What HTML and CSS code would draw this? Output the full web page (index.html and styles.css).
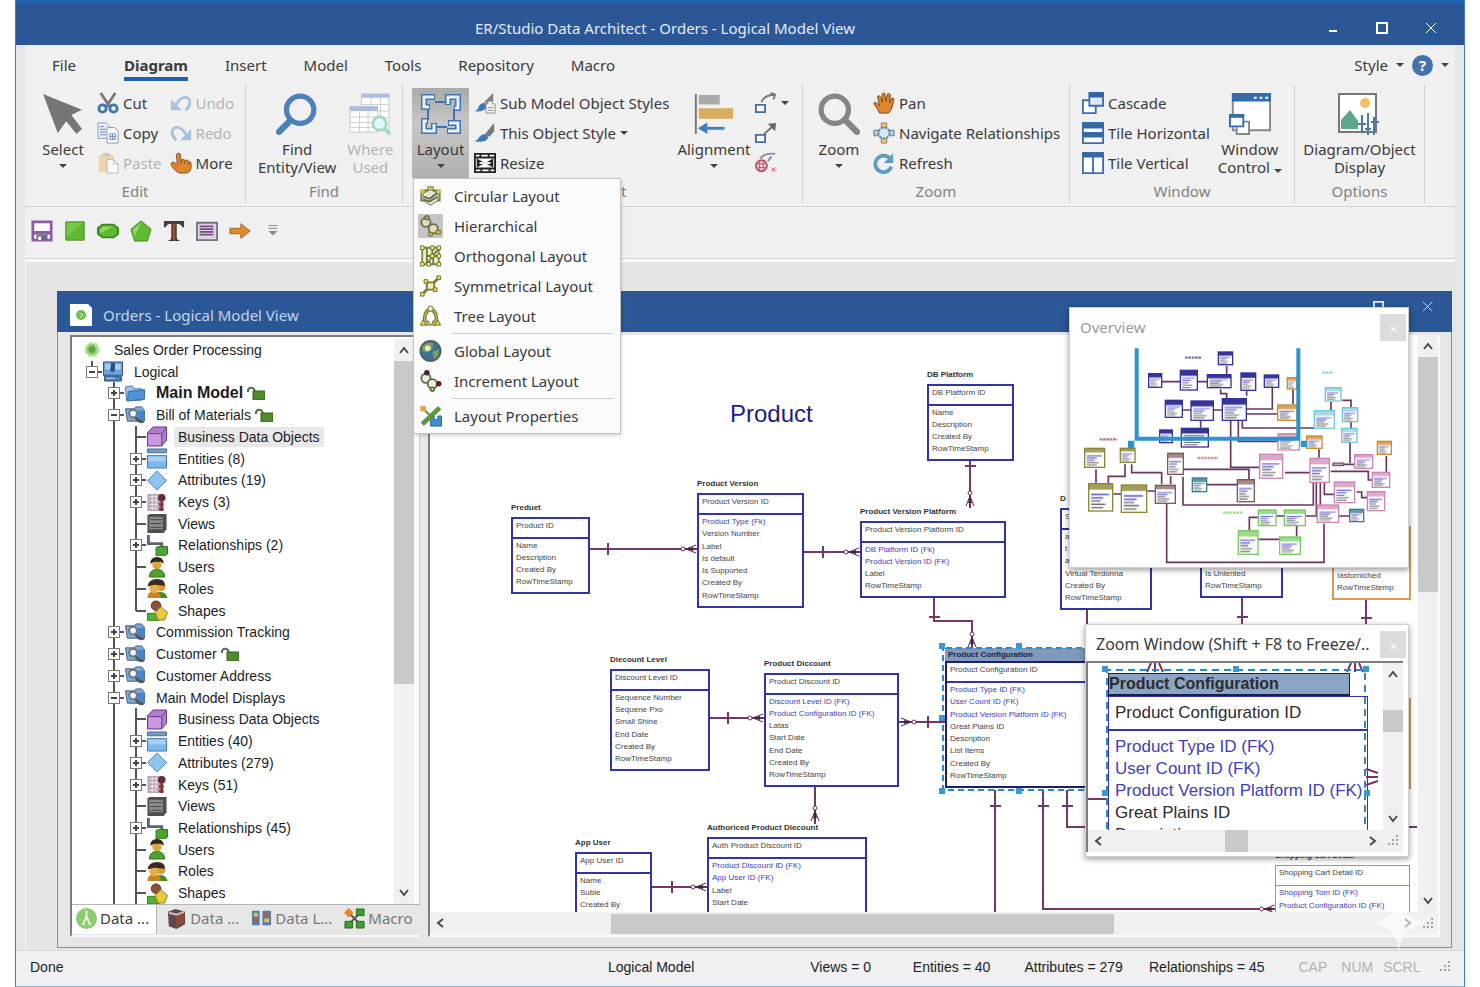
FILE: index.html
```html
<!DOCTYPE html>
<html lang="en">
<head>
    <meta charset="UTF-8">
    <meta name="viewport" content="width=device-width, initial-scale=1.0">
    <title>ER/Studio Data Architect</title>
    <link rel="stylesheet" href="styles.css">
</head>
<body>

<!-- Icon sprite -->
<svg class="sprite" aria-hidden="true">
    <symbol id="i-cursor" viewBox="0 0 40 40"><path d="M1 1L38 16L28 21L38 34L33 39L23 27L15 38Z" fill="#757575"/></symbol>
    <symbol id="i-cut" viewBox="0 0 24 24"><path d="M4 1L14 16M20 1L10 16" stroke="#777" stroke-width="3" fill="none"/><circle cx="6" cy="18" r="4" fill="none" stroke="#3c74b0" stroke-width="3"/><circle cx="18" cy="18" r="4" fill="none" stroke="#3c74b0" stroke-width="3"/></symbol>
    <symbol id="i-copy" viewBox="0 0 24 24"><path d="M1 1h9l4 4v13H1z" fill="#e8eef6" stroke="#7f9cc4"/><path d="M3 5h5M3 8h7M3 11h7M3 14h7" stroke="#5f86b8"/><path d="M11 6h8l4 4v13H11z" fill="#f8fafd" stroke="#8b98aa"/><path d="M14 13h6v6h-6zM14 16h6M17 13v6" stroke="#5f86b8" fill="none"/></symbol>
    <symbol id="i-paste" viewBox="0 0 24 24"><path d="M2 3h16v19H2z" fill="#f2d3b0"/><path d="M6 1h8v4H6z" fill="#c9c9c9"/><path d="M11 8h7l5 5v10H11z" fill="#fafafa" stroke="#b5b5b5"/><path d="M18 8v5h5" fill="none" stroke="#b5b5b5"/></symbol>
    <symbol id="i-undo" viewBox="0 0 24 24"><path d="M5 17C9 8 13 5 18 6C24 8 22 16 17 20" fill="none" stroke="#a9c0de" stroke-width="3"/><path d="M1 8v12h12z" fill="#a9c0de"/></symbol>
    <symbol id="i-redo" viewBox="0 0 24 24"><path d="M19 17C15 8 11 5 6 6C0 8 2 16 7 20" fill="none" stroke="#a9c0de" stroke-width="3"/><path d="M23 8v12H11z" fill="#a9c0de"/></symbol>
    <symbol id="i-point" viewBox="0 0 24 24"><path d="M7 3q1-3 4-1l1 7q2-2 4 0q3-1 4 1q3 0 3 3v4q-1 6-6 6h-7Q6 21 3 17Q-1 11 4 11l4 3z" fill="#dd8530" stroke="#8a4a14"/><path d="M12 9v4M16 10v3M20 11v3" stroke="#8a4a14"/></symbol>
    <symbol id="i-find" viewBox="0 0 40 40"><circle cx="23" cy="16" r="13" fill="none" stroke="#4d80ba" stroke-width="5"/><path d="M13 27L3 37" stroke="#4d80ba" stroke-width="6" stroke-linecap="round"/></symbol>
    <symbol id="i-where" viewBox="0 0 44 44"><path d="M13 1h29v38H13z" fill="#fff" stroke="#c4c4c4"/><path d="M13 1h29v4H13z" fill="#a9bede"/><path d="M13 12h29M13 19h29M13 26h29M23 5v34M33 5v34" stroke="#ccc"/><path d="M1 14h29v27H1z" fill="#fff" stroke="#c4c4c4"/><path d="M1 14h29v5H1z" fill="#a9bede"/><path d="M1 25h29M1 31h29M1 36h29M11 19v22M20 19v22" stroke="#ccc"/><circle cx="32" cy="32" r="7" fill="#e6f4fb" stroke="#a6d9c2" stroke-width="3"/><path d="M37 37l6 6" stroke="#a6d9c2" stroke-width="4"/></symbol>
    <symbol id="i-layout" viewBox="0 0 42 42"><path d="M15 9h12M8 16v11M34 16v11M15 34h12" stroke="#3f73b0" stroke-width="2"/><g fill="none" stroke="#3f73b0" stroke-width="6"><path d="M15 4H4v10h6M27 14h0M28 12V4h10v11h-4M8 28H4v10h10v-8M28 30h10v8H27"/></g><g fill="none" stroke="#e8f2fc" stroke-width="3"><path d="M14 4H4v10h5M28 11V4h10v11h-3M7 28H4v10h10v-7M29 30h9v8H28"/></g></symbol>
    <symbol id="i-brush" viewBox="0 0 24 24"><path d="M22 1L12 13l4 3z" fill="#8b8b8b"/><path d="M22 1v9l-5 6-4-3z" fill="#777"/><path d="M12 13q4 1 3 5q-3 5-14 3q4-2 5-5q2-3 6-3z" fill="#3f78b8"/></symbol>
    <symbol id="i-brushdoc" viewBox="0 0 24 24"><path d="M21 1L11 11l4 3z" fill="#9b9b9b"/><path d="M21 1v9h-5l-5 2z" fill="#808080"/><path d="M11 12q4 1 3 4q-3 6-13 5q4-2 4-5q2-4 6-4z" fill="#3f78b8"/><path d="M13 13h2v-3h5v3h3v10H13z" fill="#f4f4f4" stroke="#888"/><path d="M15 17h6M15 20h6" stroke="#888"/></symbol>
    <symbol id="i-resize" viewBox="0 0 24 24"><path d="M1 2h22v20H1z" fill="#fff" stroke="#222" stroke-width="2"/><path d="M1 6h22M1 18h22M7 2v4M17 18v4M16 2v4M8 18v4" stroke="#222" stroke-width="2"/><path d="M3 7l7 4h4l7-4v10l-7-4h-4l-7 4z" fill="#222"/><path d="M6 12h12" stroke="#fff" stroke-width="2"/></symbol>
    <symbol id="i-align" viewBox="0 0 40 44"><path d="M1 1v42" stroke="#777" stroke-width="2"/><path d="M4 2h22v10H4z" fill="#a9a9a9"/><path d="M4 16h36v11H4z" fill="#d9ac5e"/><path d="M31 37H6" stroke="#3f82bf" stroke-width="3"/><path d="M13 31v12L3 37z" fill="#3f82bf"/></symbol>
    <symbol id="i-curve" viewBox="0 0 24 24"><path d="M1 14h10v8H1z" fill="#fff" stroke="#3f6fa8" stroke-width="2"/><path d="M7 11Q10 3 22 3M17 1l5 2-2 5" fill="none" stroke="#777" stroke-width="2"/></symbol>
    <symbol id="i-straight" viewBox="0 0 24 24"><path d="M1 14h10v8H1z" fill="#fff" stroke="#3f6fa8" stroke-width="2"/><path d="M10 13L19 5" stroke="#666" stroke-width="2"/><path d="M14 2l9-1-1 9z" fill="#666"/></symbol>
    <symbol id="i-nolink" viewBox="0 0 24 24"><circle cx="7" cy="15" r="6" fill="#f0d8dc" stroke="#b5556a" stroke-width="2"/><path d="M2 13h10M3 17h9M5 10v10M9 10v10" stroke="#b5556a"/><path d="M6 7Q10 1 22 2M14 10l4-5" fill="none" stroke="#7e8c99" stroke-width="2"/><path d="M18 17l4 4M22 17l-4 4" stroke="#c03a3a" stroke-width="1"/></symbol>
    <symbol id="i-zoom" viewBox="0 0 40 40"><circle cx="16" cy="16" r="13" fill="none" stroke="#858585" stroke-width="5"/><path d="M27 27L37 37" stroke="#858585" stroke-width="6" stroke-linecap="round"/></symbol>
    <symbol id="i-pan" viewBox="0 0 24 24"><path d="M7 23Q5 18 1 13q0-3 3-1l3 3L5 5q1-2 3 0l2 6V2q2-2 3 0l1 8 2-8q2-1 3 1l-1 9 2-5q3-1 3 1l-3 11q-2 3-3 4z" fill="#dd8530" stroke="#7a4010"/></symbol>
    <symbol id="i-navigate" viewBox="0 0 24 24"><path d="M12 3v18M3 12h18" stroke="#777" stroke-width="2"/><g fill="#efc27c" stroke="#8c7a5a"><path d="M9 1h6v5H9zM9 18h6v5H9z"/></g><g fill="#b9cbe0" stroke="#55708f"><path d="M1 9h5v6H1zM18 9h5v6h-5z"/></g><circle cx="12" cy="12" r="6" fill="#d7e9f7" stroke="#6f8296" stroke-width="2" stroke-dasharray="3 1"/></symbol>
    <symbol id="i-refresh" viewBox="0 0 24 24"><path d="M19 8A9 9 0 1 0 20 16" fill="none" stroke="#5c9cc6" stroke-width="4"/><path d="M22 1v11H12z" fill="#5c9cc6"/></symbol>
    <symbol id="i-cascade" viewBox="0 0 24 24"><path d="M1 9h14v14H1z" fill="#fff" stroke="#3f6fa8" stroke-width="2"/><path d="M8 1h15v14H8z" fill="#dfe9f5" stroke="#3f6fa8" stroke-width="2"/><path d="M8 1h15v5H8z" fill="#2f62a4"/></symbol>
    <symbol id="i-tileh" viewBox="0 0 24 24"><path d="M1 1h22v22H1z" fill="#fff" stroke="#3f6fa8" stroke-width="2"/><path d="M1 1h22v6H1zM1 11h22v6H1z" fill="#3568a8"/></symbol>
    <symbol id="i-tilev" viewBox="0 0 24 24"><path d="M1 1h22v22H1z" fill="#fff" stroke="#3f6fa8" stroke-width="2"/><path d="M1 1h22v5H1z" fill="#3568a8"/><path d="M12 5v18" stroke="#3f6fa8" stroke-width="2"/></symbol>
    <symbol id="i-windows" viewBox="0 0 44 44"><path d="M4 1h39v38H4z" fill="#fff" stroke="#888" stroke-width="2"/><path d="M3 0h41v9H3z" fill="#336cab"/><path d="M26 5h3M32 5h3M38 5h3" stroke="#fff" stroke-width="2"/><path d="M8 30h13v13H8z" fill="#fff" stroke="#888" stroke-width="2"/><path d="M1 23h14v12H1z" fill="#fff" stroke="#336cab" stroke-width="2"/><path d="M1 23h14v3H1z" fill="#336cab"/></symbol>
    <symbol id="i-display" viewBox="0 0 42 42"><path d="M1 1h37v38H1z" fill="#fff" stroke="#777" stroke-width="2"/><circle cx="27" cy="10" r="5" fill="#efbf63"/><path d="M3 36V27l9-10 8 11v8z" fill="#5ea58e"/><path d="M24 22v18M30 20v22M36 24v18M20 31h8M33 29h8M27 36h6" stroke="#4d78ac" stroke-width="2"/></symbol>
    <symbol id="i-save" viewBox="0 0 24 24"><path d="M2 2h20v20H2z" fill="#fff" stroke="#8a5ca6" stroke-width="3"/><path d="M2 12h20v4H2z" fill="#8a5ca6"/><path d="M6 16h12v6H6z" fill="#6d6d7c"/><path d="M8 18h3v4H8z" fill="#fff"/></symbol>
    <symbol id="i-rect" viewBox="0 0 24 24"><path d="M2 2h20v20H2z" fill="#5fba2f" stroke="#3f8420"/><path d="M3 3h18L3 18z" fill="#75c84c"/></symbol>
    <symbol id="i-pill" viewBox="0 0 24 24"><path d="M6 5h12l5 4v6l-5 4H6l-5-4V9z" fill="#5fba2f" stroke="#3f8420" stroke-width="2"/><path d="M6 7h11L5 14l-2-2z" fill="#8ed669"/></symbol>
    <symbol id="i-penta" viewBox="0 0 24 24"><path d="M12 1l11 9-4 13H5L1 10z" fill="#5fba2f" stroke="#3f8420"/><path d="M12 3L3 11l2 7z" fill="#8ed669"/></symbol>
    <symbol id="i-text" viewBox="0 0 24 24"><path d="M1 1h22v7h-2q-1-4-6-4v15q0 3 3 3v1H6v-1q3 0 3-3V4Q4 4 3 8H1z" fill="#4a3a3e"/><path d="M12 4v18" stroke="#a34d2c" stroke-width="3"/></symbol>
    <symbol id="i-image" viewBox="0 0 24 24"><path d="M1 3h22v19H1z" fill="#dcd6e2" stroke="#6f7486" stroke-width="2"/><path d="M4 7h15M4 10h15M4 13h15M4 16h15" stroke="#7c4a86" stroke-width="2"/></symbol>
    <symbol id="i-arrow" viewBox="0 0 24 24"><path d="M1 9h12V4l10 8-10 8v-5H1z" fill="#e08a2e" stroke="#a35c18"/></symbol>

    <symbol id="m-circular" viewBox="0 0 24 24"><path d="M2 6h20v11H2z" fill="none" stroke="#827b34" stroke-width="2"/><path d="M9 2h6v4H9z" fill="#e8d558" stroke="#6d6a34"/><path d="M4 9l8-4 8 4v8l-8 5-8-5z" fill="#e3e6d8" stroke="#5b6b40"/><path d="M5 13l6 2 8-6M5 16l6 2 8-5" fill="none" stroke="#5b6b40" stroke-width="2"/><path d="M1 5h4v4H1zM19 5h4v4h-4z" fill="#d6c542"/></symbol>
    <symbol id="m-hier" viewBox="0 0 24 24"><g fill="#dcdcc8" stroke="#6f6f3c" stroke-width="2"><circle cx="7" cy="8" r="5"/><circle cx="15" cy="15" r="5"/><circle cx="8" cy="3" r="2"/></g><path d="M18 17h5v4h-5zM10 19h4v4h-4z" fill="#c9b54a" stroke="#6f6f3c"/></symbol>
    <symbol id="m-ortho" viewBox="0 0 24 24"><path d="M3 3h18v18H3z" fill="#eef0d6" stroke="#7f8a3c" stroke-width="2"/><path d="M8 3v18M8 12h13M14 3v9l-5 8M14 12l7-8M15 12v9" fill="none" stroke="#6f7a34" stroke-width="2"/><g fill="#f3ee7a" stroke="#6a6a30"><path d="M1 1h4v4H1zM12 1h4v4h-4zM19 1h4v4h-4zM1 19h4v4H1zM12 10h4v4h-4zM19 10h4v4h-4zM19 19h4v4h-4zM8 19h4v4H8z"/></g></symbol>
    <symbol id="m-symm" viewBox="0 0 24 24"><path d="M3 21L21 3M6 6l12 11" stroke="#7d7a34" stroke-width="3"/><path d="M8 8h8v8H8z" fill="#f1efc6" stroke="#7d7a34" stroke-width="2"/><g fill="#eadf52" stroke="#6a6a30"><path d="M19 1h4v4h-4zM1 19h4v4H1zM5 5h4v4H5zM15 14h4v4h-4z"/></g></symbol>
    <symbol id="m-tree" viewBox="0 0 24 24"><path d="M12 4Q4 8 6 19M12 4Q20 8 18 19" fill="none" stroke="#7d7a34" stroke-width="4"/><path d="M12 4Q4 8 6 19M12 4Q20 8 18 19" fill="none" stroke="#e4dc7c" stroke-width="1"/><circle cx="12" cy="4" r="3" fill="#eee9a0" stroke="#6a6a30"/><path d="M1 22l3-6 3 6zM7 22l2-5 3 5zM13 22l2-5 2 5zM17 22l3-6 3 6z" fill="#ecd63c" stroke="#6a6a30"/></symbol>
    <symbol id="m-globe" viewBox="0 0 24 24"><circle cx="12" cy="12" r="11" fill="#3c7199" stroke="#56605c" stroke-width="2"/><path d="M3 7q6-6 12-3l-1 6-6 4-5-2zM14 13l7-3q1 7-5 11z" fill="#7fa35e"/><circle cx="9" cy="9" r="3" fill="#f1f0c0"/></symbol>
    <symbol id="m-incr" viewBox="0 0 24 24"><g fill="#eef0e2" stroke="#5f6c3e" stroke-width="2"><circle cx="7" cy="9" r="5"/><circle cx="14" cy="15" r="5"/><circle cx="14" cy="21" r="2"/></g><circle cx="8" cy="3" r="3" fill="#40252a"/><circle cx="21" cy="15" r="3" fill="#5c1c20"/></symbol>
    <symbol id="m-props" viewBox="0 0 24 24"><path d="M3 3l9 9" stroke="#6f7a3c" stroke-width="2"/><path d="M1 1h6v6H1z" fill="#e2a43c"/><path d="M12 12h4v4h4v-4h4v11H12z" fill="#3f8fcf" stroke="#2d5f8c"/><path d="M3 21L22 3" stroke="#5b9a3c" stroke-width="5"/></symbol>

    <symbol id="t-root" viewBox="0 0 20 20"><circle cx="9" cy="10" r="6" fill="#86c766" stroke="#b8e0a2" stroke-width="3" stroke-dasharray="3 2"/><circle cx="9" cy="10" r="3" fill="#5da342"/></symbol>
    <symbol id="t-logical" viewBox="0 0 22 22"><path d="M1 1h20v14H1z" fill="#6ba3da" stroke="#2b4c77"/><path d="M3 3h16v6H3z" fill="#a9cdf0"/><path d="M9 2h4v8l-2 2-3-2z" fill="#234f8c"/><path d="M2 16h18v5H2z" fill="#4d7fb8" stroke="#2b4c77"/><path d="M4 18h9" stroke="#cfdff0"/></symbol>
    <symbol id="t-folder" viewBox="0 0 22 22"><path d="M1 4l7-1 2 3h8v12H2z" fill="#9cc4e8" stroke="#4f7fb0"/><path d="M4 9l17-2v10L3 19z" fill="#4c93d6" stroke="#3668a0"/></symbol>
    <symbol id="t-sub" viewBox="0 0 22 22"><path d="M1 4h9l2-2h6l3 4v11H3z" fill="#7fa9d2" stroke="#41607f"/><path d="M14 6h7v10h-7z" fill="#4486cc"/><circle cx="9" cy="9" r="4" fill="#f4f8fc" stroke="#6d747c" stroke-width="2"/><path d="M12 13q3 6 8 4" fill="none" stroke="#555" stroke-width="3"/></symbol>
    <symbol id="t-cube" viewBox="0 0 22 22"><path d="M1 7l6-6h14v14l-5 6H1z" fill="#b07bd0" stroke="#5f3a7c"/><path d="M2 8h14v12H2z" fill="#c99ae0"/><path d="M2 8h14l5-6M16 8v12" fill="none" stroke="#5f3a7c"/></symbol>
    <symbol id="t-entity" viewBox="0 0 22 22"><path d="M1 1h20v4H1z" fill="#6f9fc8" stroke="#47698a"/><path d="M1 8h20v13H1z" fill="#7db8ec" stroke="#3d75ab"/><path d="M2 9h18v5H2z" fill="#a7d0f5"/></symbol>
    <symbol id="t-attr" viewBox="0 0 22 22"><path d="M11 1l10 10-10 10L1 11z" fill="#8fc3f0" stroke="#4f86ba"/></symbol>
    <symbol id="t-keys" viewBox="0 0 22 22"><path d="M1 2h14v18H1z" fill="#b7a7b6"/><path d="M3 5h9M3 9h9M3 13h9M3 17h7M6 3v16M10 3v16" stroke="#efe6ee"/><circle cx="16" cy="6" r="4" fill="#5c2d3a"/><path d="M16 8v12M13 13h5M13 18h5" stroke="#8a3340" stroke-width="3"/></symbol>
    <symbol id="t-view" viewBox="0 0 22 22"><path d="M1 2l3-1h17v16l-3 4H1z" fill="#4f4f4f"/><path d="M3 4h14v13H3z" fill="#8c8c8c"/><path d="M4 7h12M4 11h12M4 15h12" stroke="#444"/></symbol>
    <symbol id="t-rel" viewBox="0 0 22 22"><path d="M2 0v9h14v4" fill="none" stroke="#5c6470" stroke-width="3"/><path d="M10 13l3-1h9v8l-3 2h-9z" fill="#46a82c" stroke="#2d701a"/></symbol>
    <symbol id="t-user" viewBox="0 0 22 22"><path d="M3 21q0-8 8-8t8 8z" fill="#4da32f" stroke="#2f6e1c"/><circle cx="11" cy="8" r="5" fill="#dba63c"/><path d="M4 7q0-7 7-7t7 7l-3-2H8z" fill="#33261a"/></symbol>
    <symbol id="t-role" viewBox="0 0 22 22"><path d="M12 21v-6q8-2 10 6z" fill="#3f8c28"/><circle cx="15" cy="9" r="5" fill="#d99a38"/><path d="M1 21q0-7 7-7t7 7z" fill="#c98424"/><circle cx="8" cy="11" r="5" fill="#e6b048"/><path d="M1 9q1-8 10-8t8 7L8 7z" fill="#3d2a1e"/></symbol>
    <symbol id="t-shape" viewBox="0 0 22 22"><circle cx="10" cy="6" r="5" fill="#8c5138" stroke="#5c3020"/><path d="M1 14h12v8H1z" fill="#56b036" stroke="#35781f"/><path d="M15 7l7 6-3 8h-7l-3-8z" fill="#e8c83c" stroke="#9a7c1c"/></symbol>
    <symbol id="t-lock" viewBox="0 0 18 14"><path d="M1 6V4q2-4 6-1l1 3" fill="none" stroke="#556b4c" stroke-width="2"/><path d="M6 5h12v9H6z" fill="#4f8a2c" stroke="#34601a"/></symbol>
    <symbol id="b-data" viewBox="0 0 22 22"><circle cx="11" cy="11" r="11" fill="#8ccb72"/><path d="M11 3v6l-4 9M11 9l4 9" stroke="#eef8e8" stroke-width="2" fill="none"/></symbol>
    <symbol id="b-dict" viewBox="0 0 22 22"><path d="M2 4l8-3 10 3v13l-9 5-8-3z" fill="#5b4a48"/><path d="M10 7l9-2v11l-8 4z" fill="#8a4a36"/><path d="M3 5l8 2 8-3" stroke="#c9c0bc" stroke-width="2" fill="none"/></symbol>
    <symbol id="b-lineage" viewBox="0 0 22 22"><path d="M1 3h8v15H1zM12 3h9v15h-9z" fill="#4f7fae"/><path d="M3 5h4v4H3zM14 11h5v4h-5z" fill="#e9c24b"/><path d="M3 11h4v4H3zM14 5h5v4h-5z" fill="#c2583a"/></symbol>
    <symbol id="b-macro" viewBox="0 0 22 22"><path d="M5 5l12 12M17 5L5 17" stroke="#555" stroke-width="2"/><path d="M5 0l5 5-5 5-5-5z" fill="#e5862d"/><path d="M13 1h8v7h-8zM1 14h8v7H1zM13 14h8v7h-8z" fill="#3f9c2c" stroke="#256a18"/></symbol>

    <symbol id="c-up" viewBox="0 0 12 12"><path d="M2 9l4-5 4 5" fill="none" stroke="#4a4a4a" stroke-width="2"/></symbol>
    <symbol id="c-down" viewBox="0 0 12 12"><path d="M2 3l4 5 4-5" fill="none" stroke="#4a4a4a" stroke-width="2"/></symbol>
    <symbol id="c-left" viewBox="0 0 12 12"><path d="M9 2L4 6l5 4" fill="none" stroke="#4a4a4a" stroke-width="2"/></symbol>
    <symbol id="c-right" viewBox="0 0 12 12"><path d="M3 2l5 4-5 4" fill="none" stroke="#4a4a4a" stroke-width="2"/></symbol>
    <symbol id="c-close" viewBox="0 0 12 12"><path d="M1 1l10 10M11 1L1 11" fill="none" stroke="currentColor" stroke-width="2"/></symbol>
    <symbol id="c-grip" viewBox="0 0 12 12"><path d="M9 1h2M9 5h2M9 9h2M5 5h2M5 9h2M1 9h2" stroke="#a2a2a2" stroke-width="2"/></symbol>
    <symbol id="foot" viewBox="0 0 16 12"><path d="M5 6h11M6 6l10-4M6 6l10 4" fill="none" stroke="#5a2450"/><path d="M7 6l6-2v4z" fill="#3c2238"/><circle cx="3" cy="6" r="2" fill="#fff" stroke="#6f2f62"/></symbol>
</svg>

<div class="app">
    <!-- Title bar -->
    <header class="titlebar">
        <h1>ER/Studio Data Architect - Orders - Logical Model View</h1>
        <div class="caption">
            <button aria-label="Minimize"><svg viewBox="0 0 12 12"><path d="M2 9h8" stroke="#fff" stroke-width="2"/></svg></button>
            <button aria-label="Maximize"><svg viewBox="0 0 12 12"><path d="M1 1h10v10H1z" fill="none" stroke="#fff" stroke-width="2"/></svg></button>
            <button aria-label="Close"><svg viewBox="0 0 12 12"><path d="M1 1l10 10M11 1L1 11" stroke="#fff" stroke-width="1"/></svg></button>
        </div>
    </header>

    <div class="frame">
        <!-- Ribbon tabs -->
        <nav class="tabs">
            <a href="#">File</a>
            <a href="#" class="active">Diagram</a>
            <a href="#">Insert</a>
            <a href="#">Model</a>
            <a href="#">Tools</a>
            <a href="#">Repository</a>
            <a href="#">Macro</a>
            <div class="tabs-right">
                <button>Style</button>
                <span class="caret"></span>
                <button class="help" aria-label="Help">?</button>
                <span class="caret"></span>
            </div>
        </nav>

        <!-- Ribbon -->
        <div class="ribbon">
            <section class="group g-edit">
                <div class="tools">
                    <button class="big"><svg><use href="#i-cursor"/></svg><span>Select</span><i class="caret"></i></button>
                    <div class="stack">
                        <button><svg><use href="#i-cut"/></svg>Cut</button>
                        <button><svg><use href="#i-copy"/></svg>Copy</button>
                        <button disabled><svg><use href="#i-paste"/></svg>Paste</button>
                    </div>
                    <div class="stack">
                        <button disabled><svg><use href="#i-undo"/></svg>Undo</button>
                        <button disabled><svg><use href="#i-redo"/></svg>Redo</button>
                        <button><svg><use href="#i-point"/></svg>More</button>
                    </div>
                </div>
                <h2>Edit</h2>
            </section>
            <section class="group g-find">
                <div class="tools">
                    <button class="big"><svg><use href="#i-find"/></svg><span>Find<br>Entity/View</span></button>
                    <button class="big" disabled><svg><use href="#i-where"/></svg><span>Where<br>Used</span></button>
                </div>
                <h2>Find</h2>
            </section>
            <section class="group g-layout">
                <div class="tools">
                    <div class="dropdown">
                        <button class="big open"><svg><use href="#i-layout"/></svg><span>Layout</span><i class="caret"></i></button>
                        <ul class="menu">
                            <li><button><svg><use href="#m-circular"/></svg>Circular Layout</button></li>
                            <li><button class="checked"><svg><use href="#m-hier"/></svg>Hierarchical</button></li>
                            <li><button><svg><use href="#m-ortho"/></svg>Orthogonal Layout</button></li>
                            <li><button><svg><use href="#m-symm"/></svg>Symmetrical Layout</button></li>
                            <li><button><svg><use href="#m-tree"/></svg>Tree Layout</button></li>
                            <li class="sep"></li>
                            <li><button><svg><use href="#m-globe"/></svg>Global Layout</button></li>
                            <li><button><svg><use href="#m-incr"/></svg>Increment Layout</button></li>
                            <li class="sep"></li>
                            <li><button><svg><use href="#m-props"/></svg>Layout Properties</button></li>
                        </ul>
                    </div>
                    <div class="stack">
                        <button><svg><use href="#i-brushdoc"/></svg>Sub Model Object Styles</button>
                        <button><svg><use href="#i-brush"/></svg>This Object Style<i class="caret"></i></button>
                        <button><svg><use href="#i-resize"/></svg>Resize</button>
                    </div>
                    <button class="big align"><svg><use href="#i-align"/></svg><span>Alignment</span><i class="caret"></i></button>
                    <div class="stack">
                        <button aria-label="Curved connector"><svg><use href="#i-curve"/></svg><i class="caret"></i></button>
                        <button aria-label="Straight connector"><svg><use href="#i-straight"/></svg></button>
                        <button aria-label="Remove connector"><svg><use href="#i-nolink"/></svg></button>
                    </div>
                </div>
                <h2>Layout</h2>
            </section>
            <section class="group g-zoom">
                <div class="tools">
                    <button class="big"><svg><use href="#i-zoom"/></svg><span>Zoom</span><i class="caret"></i></button>
                    <div class="stack">
                        <button><svg><use href="#i-pan"/></svg>Pan</button>
                        <button><svg><use href="#i-navigate"/></svg>Navigate Relationships</button>
                        <button><svg><use href="#i-refresh"/></svg>Refresh</button>
                    </div>
                </div>
                <h2>Zoom</h2>
            </section>
            <section class="group g-window">
                <div class="tools">
                    <div class="stack">
                        <button><svg><use href="#i-cascade"/></svg>Cascade</button>
                        <button><svg><use href="#i-tileh"/></svg>Tile Horizontal</button>
                        <button><svg><use href="#i-tilev"/></svg>Tile Vertical</button>
                    </div>
                    <button class="big"><svg><use href="#i-windows"/></svg><span>Window<br>Control <i class="caret"></i></span></button>
                </div>
                <h2>Window</h2>
            </section>
            <section class="group g-options">
                <div class="tools">
                    <button class="big"><svg><use href="#i-display"/></svg><span>Diagram/Object<br>Display</span></button>
                </div>
                <h2>Options</h2>
            </section>
        </div>

        <!-- Quick toolbar -->
        <div class="quickbar">
            <button aria-label="Save"><svg><use href="#i-save"/></svg></button>
            <button aria-label="Rectangle"><svg><use href="#i-rect"/></svg></button>
            <button aria-label="Rounded shape"><svg><use href="#i-pill"/></svg></button>
            <button aria-label="Pentagon"><svg><use href="#i-penta"/></svg></button>
            <button aria-label="Text"><svg><use href="#i-text"/></svg></button>
            <button aria-label="Title block"><svg><use href="#i-image"/></svg></button>
            <button aria-label="Connector"><svg><use href="#i-arrow"/></svg></button>
            <button aria-label="More tools"><svg viewBox="0 0 24 24"><path d="M7 6h10M7 9h10" stroke="#888"/><path d="M7 12h10l-5 5z" fill="#888"/></svg></button>
        </div>

        <!-- Document area -->
        <main class="workspace">
            <div class="doc">
                <div class="doc-title">
                    <svg class="doc-icon" viewBox="0 0 22 22"><path d="M0 0h18l4 4v18H0z" fill="#fff"/><circle cx="11" cy="11" r="5" fill="#6bbf4a"/><path d="M9 9l4 2-3 3" fill="none" stroke="#d4efc8"/></svg>
                    <h2>Orders - Logical Model View</h2>
                    <button aria-label="Restore"><svg viewBox="0 0 12 12"><path d="M1 1h10v10H1z" fill="none" stroke="#dfe8f5" stroke-width="2"/></svg></button>
                    <button aria-label="Close document"><svg viewBox="0 0 12 12"><path d="M1 1l10 10M11 1L1 11" stroke="#dfe8f5" stroke-width="1"/></svg></button>
                </div>
                <div class="doc-body">
                    <!-- Explorer -->
                    <aside class="explorer">
                        <div class="tree-wrap">
                            <ul class="tree">
                                <li><svg><use href="#t-root"/></svg><span>Sales Order Processing</span></li>
                                <li><i class="branch top"><button class="minus" aria-label="Collapse"></button></i><svg><use href="#t-logical"/></svg><span>Logical</span></li>
                                <li><i class="gap"></i><i class="branch"><button class="plus" aria-label="Expand"></button></i><svg><use href="#t-folder"/></svg><span><b>Main Model</b></span><svg class="lock"><use href="#t-lock"/></svg></li>
                                <li><i class="gap"></i><i class="branch"><button class="minus" aria-label="Collapse"></button></i><svg><use href="#t-sub"/></svg><span>Bill of Materials</span><svg class="lock"><use href="#t-lock"/></svg></li>
                                <li><i class="gap"></i><i class="guide"></i><i class="branch"></i><svg><use href="#t-cube"/></svg><span class="selected">Business Data Objects</span></li>
                                <li><i class="gap"></i><i class="guide"></i><i class="branch"><button class="plus" aria-label="Expand"></button></i><svg><use href="#t-entity"/></svg><span>Entities (8)</span></li>
                                <li><i class="gap"></i><i class="guide"></i><i class="branch"><button class="plus" aria-label="Expand"></button></i><svg><use href="#t-attr"/></svg><span>Attributes (19)</span></li>
                                <li><i class="gap"></i><i class="guide"></i><i class="branch"><button class="plus" aria-label="Expand"></button></i><svg><use href="#t-keys"/></svg><span>Keys (3)</span></li>
                                <li><i class="gap"></i><i class="guide"></i><i class="branch"></i><svg><use href="#t-view"/></svg><span>Views</span></li>
                                <li><i class="gap"></i><i class="guide"></i><i class="branch"><button class="plus" aria-label="Expand"></button></i><svg><use href="#t-rel"/></svg><span>Relationships (2)</span></li>
                                <li><i class="gap"></i><i class="guide"></i><i class="branch"></i><svg><use href="#t-user"/></svg><span>Users</span></li>
                                <li><i class="gap"></i><i class="guide"></i><i class="branch"></i><svg><use href="#t-role"/></svg><span>Roles</span></li>
                                <li><i class="gap"></i><i class="guide"></i><i class="branch last"></i><svg><use href="#t-shape"/></svg><span>Shapes</span></li>
                                <li><i class="gap"></i><i class="branch"><button class="plus" aria-label="Expand"></button></i><svg><use href="#t-sub"/></svg><span>Commission Tracking</span></li>
                                <li><i class="gap"></i><i class="branch"><button class="plus" aria-label="Expand"></button></i><svg><use href="#t-sub"/></svg><span>Customer</span><svg class="lock"><use href="#t-lock"/></svg></li>
                                <li><i class="gap"></i><i class="branch"><button class="plus" aria-label="Expand"></button></i><svg><use href="#t-sub"/></svg><span>Customer Address</span></li>
                                <li><i class="gap"></i><i class="branch"><button class="minus" aria-label="Collapse"></button></i><svg><use href="#t-sub"/></svg><span>Main Model Displays</span></li>
                                <li><i class="gap"></i><i class="guide"></i><i class="branch"></i><svg><use href="#t-cube"/></svg><span>Business Data Objects</span></li>
                                <li><i class="gap"></i><i class="guide"></i><i class="branch"><button class="plus" aria-label="Expand"></button></i><svg><use href="#t-entity"/></svg><span>Entities (40)</span></li>
                                <li><i class="gap"></i><i class="guide"></i><i class="branch"><button class="plus" aria-label="Expand"></button></i><svg><use href="#t-attr"/></svg><span>Attributes (279)</span></li>
                                <li><i class="gap"></i><i class="guide"></i><i class="branch"><button class="plus" aria-label="Expand"></button></i><svg><use href="#t-keys"/></svg><span>Keys (51)</span></li>
                                <li><i class="gap"></i><i class="guide"></i><i class="branch"></i><svg><use href="#t-view"/></svg><span>Views</span></li>
                                <li><i class="gap"></i><i class="guide"></i><i class="branch"><button class="plus" aria-label="Expand"></button></i><svg><use href="#t-rel"/></svg><span>Relationships (45)</span></li>
                                <li><i class="gap"></i><i class="guide"></i><i class="branch"></i><svg><use href="#t-user"/></svg><span>Users</span></li>
                                <li><i class="gap"></i><i class="guide"></i><i class="branch"></i><svg><use href="#t-role"/></svg><span>Roles</span></li>
                                <li><i class="gap"></i><i class="guide"></i><i class="branch"></i><svg><use href="#t-shape"/></svg><span>Shapes</span></li>
                            </ul>
                            <div class="vscroll tree-scroll">
                                <button aria-label="Scroll up"><svg><use href="#c-up"/></svg></button>
                                <div class="track"><div class="thumb"></div></div>
                                <button aria-label="Scroll down"><svg><use href="#c-down"/></svg></button>
                            </div>
                        </div>
                        <div class="bottom-tabs">
                            <button class="active"><svg><use href="#b-data"/></svg>Data ...</button>
                            <button><svg><use href="#b-dict"/></svg>Data ...</button>
                            <button><svg><use href="#b-lineage"/></svg>Data L...</button>
                            <button><svg><use href="#b-macro"/></svg>Macro</button>
                        </div>
                    </aside>

                    <!-- Diagram -->
                    <section class="pane">
                        <div class="canvas">
                            <h3 class="region">Product</h3>
                            <svg class="links" viewBox="430 335 987 577">
                                <g fill="none" stroke="#74376a" stroke-width="2">
                                    <path d="M590 549H697M608 543v12"/>
                                    <path d="M804 552H860M823 546v12"/>
                                    <path d="M970 461V508M965 466h11"/>
                                    <path d="M934 598V621H972V648M929 617h11"/>
                                    <path d="M710 718H764M728 712v12"/>
                                    <path d="M899 722H945M928 716v12"/>
                                    <path d="M815 787V824"/>
                                    <path d="M652 887H707M672 881v12"/>
                                    <path d="M995 790V912M990 806h11"/>
                                    <path d="M1043 790V909H1275M1038 806h11"/>
                                    <path d="M1067 790V827H1417M1062 806h11"/>
                                    <path d="M1087 610V630"/>
                                    <path d="M1242 598V630M1237 617h11"/>
                                    <path d="M1366 600V630M1361 618h11"/>
                                </g>
                                <use href="#foot" x="680" y="543" width="16" height="12"/>
                                <use href="#foot" x="842" y="546" width="18" height="12"/>
                                <use href="#foot" x="746" y="712" width="18" height="12"/>
                                <use href="#foot" x="689" y="881" width="18" height="12"/>
                                <use href="#foot" x="1258" y="903" width="17" height="12"/>
                                <use href="#foot" x="489" y="-976" width="18" height="12" transform="rotate(90)"/>
                                <use href="#foot" x="630" y="-978" width="18" height="12" transform="rotate(90)"/>
                                <use href="#foot" x="804" y="-821" width="18" height="12" transform="rotate(90)"/>
                                <use href="#foot" x="-918" y="-728" width="18" height="12" transform="rotate(180)"/>
                                <path d="M1405 699h5v89h-5M1405 719h5" fill="none" stroke="#d99a5a" stroke-width="2"/>
                            </svg>

                            <div class="entity e-product">
                                <h4>Preduet</h4>
                                <div class="box"><p>Product ID</p>
                                    <ul><li>Name</li><li>Description</li><li>Created By</li><li>RowTimeStamp</li></ul></div>
                            </div>
                            <div class="entity e-version">
                                <h4>Product Version</h4>
                                <div class="box"><p>Product Version ID</p>
                                    <ul><li class="fk">Product Type (Fk)</li><li>Version Number</li><li>Label</li><li>Is default</li><li>Is Supported</li><li>Created By</li><li>RowTimeStamp</li></ul></div>
                            </div>
                            <div class="entity e-db">
                                <h4>DB Platform</h4>
                                <div class="box"><p>DB Platform ID</p>
                                    <ul><li>Name</li><li>Description</li><li>Created By</li><li>RowTimeStamp</li></ul></div>
                            </div>
                            <div class="entity e-pvp">
                                <h4>Product Version Platform</h4>
                                <div class="box"><p>Product Version Platform ID</p>
                                    <ul><li class="fk">DB Platform ID (Fk)</li><li class="fk">Product Version ID (FK)</li><li>Label</li><li>RowTimeStamp</li></ul></div>
                            </div>
                            <div class="entity e-virtual">
                                <h4>D</h4>
                                <div class="box"><p>S</p>
                                    <ul><li>a</li><li>t</li><li>a</li><li>Virtual Terdonna</li><li>Created By</li><li>RowTimeStamp</li></ul></div>
                            </div>
                            <div class="entity e-unlented">
                                <div class="box">
                                    <ul><li>Is Unlented</li><li>RowTimeStamp</li></ul></div>
                            </div>
                            <div class="entity e-orange">
                                <div class="box">
                                    <ul><li>Iastorniched</li><li>RowTimeStemp</li></ul></div>
                            </div>
                            <div class="entity e-level">
                                <h4>Diecount Level</h4>
                                <div class="box"><p>Discount Level ID</p>
                                    <ul><li>Sequence Number</li><li>Sequene Pxo</li><li>Small Shine</li><li>End Date</li><li>Created By</li><li>RowTimeStamp</li></ul></div>
                            </div>
                            <div class="entity e-discount">
                                <h4>Product Diccount</h4>
                                <div class="box"><p>Product Discount ID</p>
                                    <ul><li class="fk">Discount Level ID (FK)</li><li class="fk">Product Configuration ID (FK)</li><li>Latas</li><li>Start Date</li><li>End Date</li><li>Created By</li><li>RowTimeStamp</li></ul></div>
                            </div>
                            <div class="entity e-config">
                                <h4>Product Configuration</h4>
                                <div class="box"><p>Product Configuration ID</p>
                                    <ul><li class="fk">Product Type ID (FK)</li><li class="fk">User Count ID (FK)</li><li class="fk">Product Version Platform ID (FK)</li><li>Great Plains ID</li><li>Description</li><li>List Items</li><li>Created By</li><li>RowTimeStamp</li></ul></div>
                            </div>
                            <div class="entity e-auth">
                                <h4>Authoriced Product Diecount</h4>
                                <div class="box"><p>Auth Product Discount ID</p>
                                    <ul><li class="fk">Product Discount ID (FK)</li><li class="fk">App User ID (FK)</li><li>Label</li><li>Start Date</li></ul></div>
                            </div>
                            <div class="entity e-user">
                                <h4>App User</h4>
                                <div class="box"><p>App User ID</p>
                                    <ul><li>Name</li><li>Suble</li><li>Created By</li></ul></div>
                            </div>
                            <div class="entity e-cart">
                                <h4>Shopping Cart Detail</h4>
                                <div class="box"><p>Shopping Cart Detail ID</p>
                                    <ul><li class="fk">Shopping Tom ID (FK)</li><li class="fk">Product Configuration ID (FK)</li></ul></div>
                            </div>

                            <!-- selection frame round the active entity -->
                            <svg class="links" viewBox="430 335 987 577">
                                <path d="M946 648H1094V790H943V648" fill="none" stroke="#2f86c8" stroke-width="2" stroke-dasharray="6 4"/>
                                <path d="M939 643h6v6h-6zM1016 643h6v6h-6zM939 715h6v6h-6zM939 788h6v6h-6zM1016 788h6v6h-6z" fill="#3a97d3"/>
                            </svg>
                        </div>
                        <div class="vscroll">
                            <button aria-label="Scroll up"><svg><use href="#c-up"/></svg></button>
                            <div class="track"><div class="thumb"></div></div>
                            <button aria-label="Scroll down"><svg><use href="#c-down"/></svg></button>
                        </div>
                        <div class="hscroll">
                            <button aria-label="Scroll left"><svg><use href="#c-left"/></svg></button>
                            <div class="track"><div class="thumb"></div></div>
                            <button aria-label="Scroll right"><svg><use href="#c-right"/></svg></button>
                        </div>
                        <svg class="grip"><use href="#c-grip"/></svg>
                    </section>
                </div>

                <!-- Overview window -->
                <section class="float overview">
                    <div class="float-head"><h3>Overview</h3><button aria-label="Close overview"><svg><use href="#c-close"/></svg></button></div>
                    <svg class="map" viewBox="15 39 1014 669">
                        <defs>
                            <!-- thumbnail of an entity: coloured head, then attribute rows -->
                            <g id="rows"><path d="M0 0h1v1H0z" fill="#fff"/><path d="M.1 .4h.75M.1 .52h.5" stroke="#6a6ad0" stroke-width=".06"/><path d="M.1 .64h.4M.1 .76h.6M.1 .88h.5" stroke="#666" stroke-width=".05"/></g>
                            <pattern id="p-navy" width="1" height="1" patternContentUnits="objectBoundingBox"><use href="#rows"/><path d="M0 0h1v.28H0z" fill="#34349a"/></pattern>
                            <pattern id="p-orange" width="1" height="1" patternContentUnits="objectBoundingBox"><use href="#rows"/><path d="M0 0h1v.28H0z" fill="#d9a55c"/></pattern>
                            <pattern id="p-cyan" width="1" height="1" patternContentUnits="objectBoundingBox"><use href="#rows"/><path d="M0 0h1v.28H0z" fill="#a5dcea"/></pattern>
                            <pattern id="p-olive" width="1" height="1" patternContentUnits="objectBoundingBox"><use href="#rows"/><path d="M0 0h1v.22H0z" fill="#a39e58"/></pattern>
                            <pattern id="p-brown" width="1" height="1" patternContentUnits="objectBoundingBox"><use href="#rows"/><path d="M0 0h1v.22H0z" fill="#a58a8a"/></pattern>
                            <pattern id="p-teal" width="1" height="1" patternContentUnits="objectBoundingBox"><use href="#rows"/><path d="M0 0h1v.3H0z" fill="#5f98a3"/></pattern>
                            <pattern id="p-pink" width="1" height="1" patternContentUnits="objectBoundingBox"><use href="#rows"/><path d="M0 0h1v.25H0z" fill="#dba9cb"/></pattern>
                            <pattern id="p-green" width="1" height="1" patternContentUnits="objectBoundingBox"><use href="#rows"/><path d="M0 0h1v.25H0z" fill="#9bdc8c"/></pattern>
                        </defs>
                        <g fill="none" stroke="#6b3562" stroke-width="5">
                            <path d="M290 152H345M397 152H427M485 105V130M467 175V188H485V202M545 180v14M622 170V234H545M545 249H640M684 175v45"/>
                            <path d="M352 237H378M446 237H471M407 268v22M497 268V409H584M520 268V331H640M532 268V291H748"/>
                            <path d="M798 212V238M832 208H858V230M858 272V292M855 335V396M762 355V380M93 415V456M180 400V436H130V458M200 400V425H290V460M317 435V460M145 489H168M247 480H271"/>
                            <path d="M356 415H552V444M354 437V522H745V455M425 461H516M660 425H735M797 421H910V447H922M802 400H870M964 375V424M754 455V555M766 455V522M778 455V490H808M875 483H890V500H908"/>
                            <path d="M822 555H853M634 555H658M722 555H758M580 559H553V598M580 625H643M695 585V616M305 517V694H777V578"/>
                        </g>
                        <g stroke-width="4">
                            <g class="m-navy">
                                <rect x="460" y="63" width="43" height="38"/><rect x="251" y="128" width="39" height="41"/><rect x="346" y="118" width="51" height="59"/><rect x="427" y="131" width="71" height="39"/><rect x="528" y="126" width="44" height="52"/><rect x="598" y="132" width="43" height="37"/><rect x="301" y="208" width="51" height="51"/><rect x="378" y="210" width="67" height="58"/><rect x="472" y="203" width="72" height="65"/><rect x="284" y="297" width="38" height="38"/><rect x="349" y="292" width="81" height="56"/>
                            </g>
                            <g class="m-orange"><rect x="667" y="140" width="28" height="34"/><rect x="638" y="222" width="58" height="46"/><rect x="937" y="331" width="42" height="39"/><rect x="725" y="315" width="46" height="37"/></g>
                            <g class="m-cyan"><rect x="781" y="170" width="47" height="40"/><rect x="748" y="239" width="60" height="53"/><rect x="832" y="230" width="46" height="42"/><rect x="830" y="292" width="46" height="42"/></g>
                            <g class="m-olive"><rect x="59" y="352" width="60" height="57"/><rect x="166" y="352" width="44" height="42"/><rect x="71" y="458" width="72" height="82"/><rect x="169" y="462" width="76" height="82"/></g>
                            <g class="m-brown"><rect x="308" y="367" width="47" height="63"/><rect x="271" y="463" width="60" height="54"/><rect x="517" y="446" width="51" height="66"/></g>
                            <g class="m-teal"><rect x="382" y="441" width="43" height="41"/><rect x="854" y="535" width="42" height="37"/></g>
                            <g class="m-pink"><rect x="639" y="308" width="64" height="49"/><rect x="584" y="370" width="69" height="72"/><rect x="735" y="382" width="58" height="72"/><rect x="869" y="371" width="54" height="41"/><rect x="922" y="424" width="52" height="45"/><rect x="808" y="453" width="61" height="62"/><rect x="907" y="482" width="52" height="57"/><rect x="757" y="522" width="64" height="52"/></g>
                            <g class="m-green"><rect x="580" y="537" width="53" height="47"/><rect x="658" y="537" width="63" height="47"/><rect x="520" y="599" width="59" height="71"/><rect x="644" y="618" width="62" height="52"/></g>
                        </g>
                        <path d="M804 396h32v8h-32z" fill="#caa" stroke="#6b3562" stroke-width="3"/>
                        <g stroke-width="7" stroke-dasharray="8 2" opacity=".7">
                            <path d="M360 80h50" stroke="#3a3a9c"/><path d="M772 125h32" stroke="#5cc4de"/><path d="M104 325h52" stroke="#8c3a52"/><path d="M397 381h62" stroke="#c47070"/><path d="M474 545h60" stroke="#7ccf62"/>
                        </g>
                        <path d="M215 52V323H700V52" fill="none" stroke="#2b93d1" stroke-width="12"/>
                        <path d="M189 329h19v22h-19zM707 329h19v19h-19z" fill="#2b93d1"/>
                    </svg>
                </section>

                <!-- Zoom window -->
                <section class="float zoomwin">
                    <div class="float-head"><h3>Zoom Window (Shift + F8 to Freeze/..</h3><button aria-label="Close zoom window"><svg><use href="#c-close"/></svg></button></div>
                    <div class="zoom-body">
                        <div class="zoom-view">
                            <div class="zentity">
                                <h4>Product Configuration</h4>
                                <div class="zbox">
                                    <p>Product Configuration ID</p>
                                    <ul><li class="fk">Product Type ID (FK)</li><li class="fk">User Count ID (FK)</li><li class="fk">Product Version Platform ID (FK)</li><li>Great Plains ID</li><li>Description</li></ul>
                                </div>
                            </div>
                            <svg class="zlinks" viewBox="1089 664 291 166">
                                <path d="M1148 673l4-9M1156 673v-9M1164 673l-4-9M1348 673l4-9M1356 673v-9M1364 673l-4-9M1367 770l12 4M1367 778h12M1367 786l12-4M1089 800h20" fill="none" stroke="#74376a" stroke-width="2"/>
                                <path d="M1108 830V671H1366V830" fill="none" stroke="#2f86c8" stroke-width="2" stroke-dasharray="7 5"/>
                                <path d="M1103 667h6v6h-6zM1234 667h6v6h-6zM1364 667h6v6h-6zM1103 791h6v6h-6zM1365 791h6v6h-6z" fill="#3a97d3"/>
                            </svg>
                        </div>
                        <div class="vscroll">
                            <button aria-label="Scroll up"><svg><use href="#c-up"/></svg></button>
                            <div class="track"><div class="thumb"></div></div>
                            <button aria-label="Scroll down"><svg><use href="#c-down"/></svg></button>
                        </div>
                        <div class="hscroll">
                            <button aria-label="Scroll left"><svg><use href="#c-left"/></svg></button>
                            <div class="track"><div class="thumb"></div></div>
                            <button aria-label="Scroll right"><svg><use href="#c-right"/></svg></button>
                        </div>
                        <svg class="grip"><use href="#c-grip"/></svg>
                    </div>
                </section>
                <svg class="sparkle" viewBox="0 0 56 56"><path d="M28 0Q31 25 56 28Q31 31 28 56Q25 31 0 28Q25 25 28 0z" fill="#fff" opacity=".6"/></svg>
            </div>
        </main>
    </div>

    <!-- Status bar -->
    <footer class="status">
        <span>Done</span>
        <span>Logical Model</span>
        <span>Views = 0</span>
        <span>Entities = 40</span>
        <span>Attributes = 279</span>
        <span>Relationships = 45</span>
        <span class="off">CAP</span>
        <span class="off">NUM</span>
        <span class="off">SCRL</span>
        <svg class="grip"><use href="#c-grip"/></svg>
    </footer>
</div>
</body>
</html>
```
FILE: styles.css
```css
* {
    box-sizing: border-box;
}
body {
    margin: 0;
    background: #fff;
    font-family: "Noto Sans", sans-serif;
    font-size: 15px;
    color: #3a3a3a;
}
h1, h2, h3, h4, p, ul {
    margin: 0;
    padding: 0;
    font-weight: normal;
    list-style: none;
}
button {
    padding: 0;
    border: none;
    background: none;
    font: inherit;
    color: inherit;
}
button:disabled {
    color: #b4b4b4;
}
a {
    color: inherit;
    text-decoration: none;
}
.sprite {
    display: none;
}
.caret {
    display: inline-block;
    border: 4px solid transparent;
    border-top-color: #444;
    border-bottom: none;
}

.app {
    display: flex;
    flex-direction: column;
    min-height: 100vh;
    margin: 0 15px;
    background: #f0f0f0;
    border: 1px solid #3c7cc4;
    border-top: none;
    border-bottom-color: #8fb0d0;
}

/* Title bar */
.titlebar {
    display: flex;
    align-items: center;
    height: 45px;
    padding: 8px 9px 0 0;
    background: #2b5797;
    border-top: 3px solid #1c64b0;
    color: #e4ebf5;
}
.titlebar h1 {
    flex: 1;
    padding-left: 6px;
    text-align: center;
    font-size: 15px;
}
.caption {
    display: flex;
}
.caption button {
    width: 49px;
}
.caption svg {
    width: 12px;
    height: 12px;
}

.frame {
    flex: 1;
    display: flex;
    flex-direction: column;
    margin: 0 9px;
    box-shadow: -9px 0 #e6e6e6, 9px 0 #e6e6e6;
}

/* Ribbon tabs */
.tabs {
    display: flex;
    gap: 37px;
    height: 40px;
    padding: 0 6px 0 27px;
    align-items: flex-start;
}
.tabs a {
    height: 36px;
    line-height: 40px;
}
.tabs .active {
    margin-left: 11px;
    font-weight: bold;
    border-bottom: 4px solid #1f62b0;
}
.tabs-right {
    display: flex;
    align-items: center;
    gap: 8px;
    height: 40px;
    margin-left: auto;
}
.help {
    width: 21px;
    height: 21px;
    border-radius: 50%;
    background: #4473ab;
    color: #fff;
    font-weight: bold;
    line-height: 21px;
}

/* Ribbon */
.ribbon {
    display: grid;
    grid-template-columns: 221fr 157fr 400fr 267fr 225fr 130fr 30fr;
    height: 122px;
    border-bottom: 1px solid #d2d2d2;
}
.group {
    height: 118px;
    padding-top: 3px;
    border-right: 1px solid #cfcfcf;
}
.group h2 {
    font-size: 15px;
    line-height: 26px;
    text-align: center;
    color: #828282;
}
.tools {
    display: flex;
    gap: 8px;
    height: 90px;
}
.g-edit .tools, .g-find .tools {
    padding-left: 12px;
}
.g-layout .tools {
    padding-left: 9px;
    gap: 5px;
}
.g-zoom .tools {
    padding-left: 10px;
}
.g-window .tools {
    padding-left: 12px;
}
.g-options .tools {
    justify-content: center;
}
.stack {
    display: flex;
    flex-direction: column;
}
.stack button {
    display: flex;
    align-items: center;
    gap: 4px;
    height: 30px;
    white-space: nowrap;
    line-height: 30px;
}
.stack svg {
    width: 22px;
    height: 22px;
}
.big {
    display: flex;
    flex-direction: column;
    align-items: center;
    min-width: 52px;
    height: 90px;
    padding-top: 5px;
    line-height: 18px;
}
.big svg {
    width: 42px;
    height: 42px;
    margin-bottom: 5px;
}
.big > .caret {
    margin-top: 6px;
}
.align {
    margin-left: 3px;
}
.open {
    width: 57px;
    background: linear-gradient(#a9a9a9, #c6c6c6 40%, #b0b0b0);
}

/* Layout menu */
.dropdown {
    position: relative;
}
.menu {
    position: absolute;
    z-index: 10;
    top: 90px;
    left: 1px;
    width: 208px;
    padding: 2px 0;
    background: #fbfbfb;
    border: 1px solid #c2c2c2;
    box-shadow: 1px 2px 3px rgba(0, 0, 0, 0.15);
}
.menu button {
    display: flex;
    align-items: center;
    gap: 8px;
    width: 100%;
    height: 30px;
    padding-left: 4px;
}
.menu svg {
    width: 25px;
    height: 24px;
    padding: 1px;
    margin-right: 3px;
}
.checked svg {
    background: #c4c4c4;
}
.sep {
    height: 1px;
    margin: 2px 7px 2px 38px;
    background: #cdcdcd;
}

/* Quick toolbar */
.quickbar {
    display: flex;
    align-items: center;
    gap: 11px;
    height: 52px;
    padding: 0 6px 4px;
}
.quickbar button {
    height: 22px;
}
.quickbar svg {
    width: 22px;
    height: 22px;
}

/* Document area */
.workspace {
    flex: 1;
    display: flex;
    padding: 29px 3px 2px 31px;
    background: #e5e5e5;
    border-top: 3px solid #f8f8f8;
    border-left: 1px solid #f8f8f8;
    box-shadow: 0 -1px #cfcfcf;
}
.doc {
    position: relative;
    flex: 1;
    display: flex;
    flex-direction: column;
    background: #e6e6e6;
    border: 1px solid #8f8f8f;
    border-top: none;
}
.doc-title {
    display: flex;
    align-items: center;
    height: 41px;
    margin: 0 -1px;
    padding: 7px 0 0 13px;
    background: #2b5797;
    color: #c6d4e8;
}
.doc-title h2 {
    flex: 1;
    padding-left: 11px;
    font-size: 15px;
}
.doc-icon {
    width: 22px;
    height: 22px;
}
.doc-title button {
    align-self: flex-start;
    width: 49px;
    height: 16px;
    line-height: 0;
}
.doc-title button svg {
    width: 11px;
    height: 11px;
}
.doc-body {
    flex: 1;
    display: flex;
    gap: 8px;
    padding: 3px 11px 10px 12px;
}

/* Explorer */
.explorer {
    display: flex;
    flex-direction: column;
    width: 350px;
    border: 2px solid #7d7d7d;
    border-right: none;
    border-bottom-color: #f8f8f8;
}
.tree-wrap {
    flex: 1;
    display: flex;
    padding: 2px 5px 0 0;
    background: #fff;
    border-right: 1px solid #c8c8c8;
}
.tree {
    flex: 1;
    display: flex;
    flex-direction: column;
    padding-left: 10px;
    font-family: "Liberation Sans", sans-serif;
    font-size: 14px;
    color: #1c1c1c;
}
.tree li {
    flex: 1;
    display: flex;
    align-items: center;
    max-height: 24px;
}
.tree svg {
    width: 22px;
    height: 21px;
}
.tree span {
    margin-left: 6px;
    padding: 0 4px;
    line-height: 20px;
    white-space: nowrap;
}
.tree b {
    font-size: 16px;
}
.tree .lock {
    width: 18px;
    height: 14px;
}
.tree .selected {
    background: #e8e8e8;
}
.gap, .guide {
    width: 22px;
    align-self: stretch;
}
.guide {
    background: linear-gradient(#555, #555) 9px 0 / 2px 100% no-repeat;
}
.branch {
    display: flex;
    align-items: center;
    width: 20px;
    align-self: stretch;
    padding-left: 4px;
    background: linear-gradient(#555, #555) 9px 0 / 2px 100% no-repeat,
                linear-gradient(#555, #555) 10px 50% / 10px 2px no-repeat;
}
.branch.last, .branch.top {
    background-size: 2px 50%, 10px 2px;
}
.minus, .plus {
    width: 12px;
    height: 12px;
    border: 1px solid #777;
    background: linear-gradient(#444, #444) 50% 50% / 6px 2px no-repeat, #fff;
}
.plus {
    background: linear-gradient(#444, #444) 50% 50% / 6px 2px no-repeat,
                linear-gradient(#444, #444) 50% 50% / 2px 6px no-repeat, #fff;
}
.bottom-tabs {
    display: flex;
    height: 31px;
    border-top: 1px solid #b5b5b5;
}
.bottom-tabs button {
    display: flex;
    align-items: center;
    gap: 3px;
    height: 29px;
    padding: 0 3px 3px 9px;
    color: #777;
    white-space: nowrap;
}
.bottom-tabs .active {
    padding-right: 7px;
    padding-left: 4px;
    background: #fff;
    border-right: 1px solid #b5b5b5;
    color: #3a3a3a;
}
.bottom-tabs svg {
    width: 21px;
    height: 21px;
}

/* Scroll bars */
.vscroll, .hscroll {
    display: flex;
    background: #f0f0f0;
}
.vscroll {
    flex-direction: column;
    width: 20px;
}
.vscroll button, .hscroll button {
    flex: none;
    width: 20px;
    height: 22px;
    line-height: 0;
}
.vscroll button svg, .hscroll button svg {
    width: 12px;
    height: 12px;
}
.track {
    flex: 1;
    display: flex;
}
.vscroll .track {
    flex-direction: column;
}
.thumb {
    background: #c9c9c9;
}
.tree-scroll .thumb {
    height: 62%;
}
.grip {
    width: 12px;
    height: 12px;
    place-self: center;
}

/* Diagram */
.pane {
    flex: 1;
    display: grid;
    grid-template: 1fr 23px / 1fr 20px;
    min-width: 0;
    background: #f0f0f0;
    border-left: 2px solid #7d7d7d;
    border-right: 2px solid #fafafa;
    border-bottom: 2px solid #fafafa;
}
.pane > .vscroll .thumb {
    height: 44%;
}
.pane > .hscroll .thumb {
    width: 53%;
    margin: 2px 0 1px 17%;
}
.canvas {
    position: relative;
    overflow: hidden;
    background: #fff;
    font-family: "Liberation Sans", sans-serif;
    font-size: 8px;
    color: #444;
}
.region {
    position: absolute;
    left: 300px;
    top: 65px;
    font-size: 24px;
    color: #1c1c86;
}
.links {
    position: absolute;
    left: 0;
    top: 0;
    width: 987px;
    height: 577px;
}
.entity {
    position: absolute;
    display: flex;
    flex-direction: column;
}
.entity h4 {
    margin-bottom: 4px;
    font-weight: bold;
    line-height: 10px;
    white-space: nowrap;
    color: #333;
}
.entity .box {
    flex: 1;
    display: flex;
    flex-direction: column;
    background: #fff;
    border: 2px solid #3434a0;
    white-space: nowrap;
}
.entity p {
    height: 20px;
    padding-left: 3px;
    line-height: 13px;
    border-bottom: 2px solid #3434a0;
}
.entity ul {
    flex: 1;
    display: flex;
    flex-direction: column;
    padding: 1px 0 4px 3px;
}
.entity li {
    flex: 1;
    line-height: 12px;
}
.fk {
    color: #4040b8;
}
.e-product { left: 81px; top: 168px; width: 79px; height: 91px; }
.e-version { left: 267px; top: 144px; width: 107px; height: 129px; }
.e-db { left: 497px; top: 35px; width: 87px; height: 91px; }
.e-pvp { left: 430px; top: 172px; width: 146px; height: 91px; }
.e-virtual { left: 630px; top: 159px; width: 92px; height: 116px; }
.e-unlented { left: 770px; top: 170px; width: 83px; height: 93px; }
.e-orange { left: 902px; top: 191px; width: 79px; height: 74px; }
.e-level { left: 180px; top: 320px; width: 100px; height: 116px; }
.e-discount { left: 334px; top: 324px; width: 135px; height: 128px; }
.e-config { left: 515px; top: 313px; width: 150px; height: 140px; }
.e-auth { left: 277px; top: 488px; width: 160px; height: 92px; }
.e-user { left: 145px; top: 503px; width: 77px; height: 79px; }
.e-cart { left: 845px; top: 516px; width: 135px; height: 66px; }

/* only the last rows show under the overview window */
.e-unlented ul, .e-orange ul {
    justify-content: flex-end;
}
.e-unlented li, .e-orange li {
    flex: none;
}
.e-orange .box {
    border-color: #d99a5a;
}
.e-cart .box, .e-cart p {
    border-color: #c98080;
    border-width: 1px;
}
.e-cart p {
    border-width: 0 0 1px;
}
.e-config h4 {
    margin: 0;
    padding-left: 3px;
    line-height: 13px;
    background: #7f9abb;
    color: #1d2440;
}
.e-config .box {
    border-color: #1c1c70;
}

/* Floating windows */
.float {
    position: absolute;
    right: 42px;
    background: #fff;
    border: 1px solid #cfcfcf;
    box-shadow: 0 2px 6px rgba(0, 0, 0, 0.4);
}
.float-head {
    display: flex;
    align-items: center;
    justify-content: space-between;
    height: 36px;
    padding: 2px 2px 0 10px;
}
.float-head h3 {
    font-size: 15px;
    white-space: nowrap;
}
.float-head button {
    width: 26px;
    height: 27px;
    background: #dcdcdc;
    color: #f8f8f8;
}
.float-head button svg {
    width: 7px;
    height: 7px;
}
.overview {
    top: 16px;
    width: 340px;
}
.overview h3 {
    color: #9a9a9a;
}
.map {
    display: block;
    width: 100%;
}
.m-navy { stroke: #34349a; fill: url(#p-navy); }
.m-orange { stroke: #cc8b35; fill: url(#p-orange); }
.m-cyan { stroke: #74c6dc; fill: url(#p-cyan); }
.m-olive { stroke: #8c8636; fill: url(#p-olive); }
.m-brown { stroke: #7c5a5a; fill: url(#p-brown); }
.m-teal { stroke: #3f7f8c; fill: url(#p-teal); }
.m-pink { stroke: #cc86b4; fill: url(#p-pink); }
.m-green { stroke: #74cb62; fill: url(#p-green); }

.zoomwin {
    top: 333px;
    width: 324px;
}
.zoomwin h3 {
    font-size: 16px;
}
.zoom-body {
    display: grid;
    grid-template: 167px 22px / 1fr 20px;
    margin-right: 5px;
    margin-bottom: 4px;
    background: #f0f0f0;
    border-top: 2px solid #7d7d7d;
    border-left: 2px solid #7d7d7d;
}
.zoom-view {
    position: relative;
    overflow: hidden;
    padding: 10px 15px 0 20px;
    background: #fff;
    font-family: "Liberation Sans", sans-serif;
    font-size: 17px;
    color: #2c2c2c;
}
.zentity h4 {
    width: 242px;
    font-size: 16px;
    font-weight: bold;
    line-height: 20px;
    background: #8aa4c3;
    border: 1px solid #1c1c50;
    border-bottom-width: 2px;
}
.zbox {
    border: 1px solid #3434a0;
    white-space: nowrap;
}
.zbox p {
    padding-left: 6px;
    line-height: 32px;
    border-bottom: 2px solid #3434a0;
}
.zbox ul {
    padding: 5px 0 0 6px;
}
.zbox li {
    line-height: 22px;
}
.zlinks {
    position: absolute;
    left: 0;
    top: 0;
    width: 291px;
    height: 166px;
}
.zoom-body .vscroll .thumb {
    height: 22px;
    margin-top: 25px;
}
.zoom-body .hscroll .thumb {
    width: 9%;
    margin-left: 46%;
}
.sparkle {
    position: absolute;
    right: 24px;
    bottom: -4px;
    width: 56px;
    height: 56px;
}

/* Status bar */
.status {
    display: grid;
    grid-template-columns: 580fr 203fr 103fr 112fr 125fr 150fr 43fr 42fr 50fr 24px;
    align-items: center;
    height: 36px;
    padding: 0 7px 4px 14px;
    border-top: 1px solid #d8d8d8;
    font-family: "Liberation Sans", sans-serif;
    font-size: 14px;
    color: #222;
    white-space: nowrap;
}
.off {
    color: #b2b2b2;
}
```
